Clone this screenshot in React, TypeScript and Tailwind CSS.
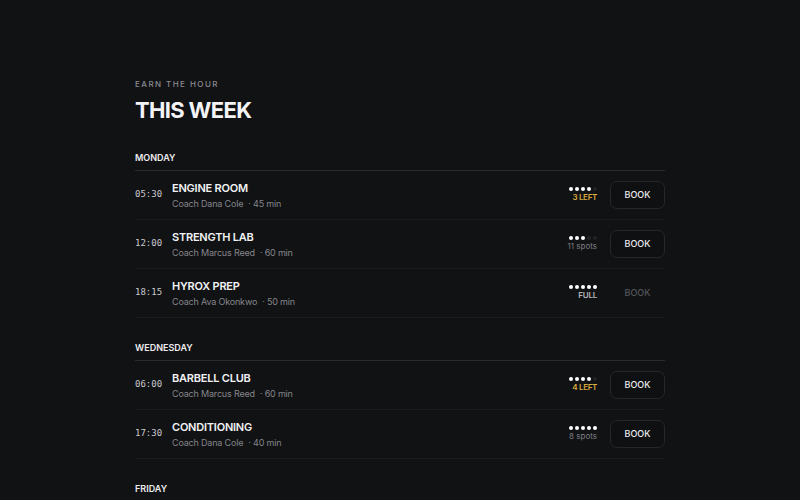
import React from "react";

type Session = {
  time: string;
  name: string;
  coach: string;
  mins: number;
  filled: number;
  status: string;
  tone: "low" | "open" | "full";
};

const days: { day: string; sessions: Session[] }[] = [
  {
    day: "MONDAY",
    sessions: [
      { time: "05:30", name: "ENGINE ROOM", coach: "Coach Dana Cole", mins: 45, filled: 4, status: "3 LEFT", tone: "low" },
      { time: "12:00", name: "STRENGTH LAB", coach: "Coach Marcus Reed", mins: 60, filled: 3, status: "11 spots", tone: "open" },
      { time: "18:15", name: "HYROX PREP", coach: "Coach Ava Okonkwo", mins: 50, filled: 5, status: "FULL", tone: "full" },
    ],
  },
  {
    day: "WEDNESDAY",
    sessions: [
      { time: "06:00", name: "BARBELL CLUB", coach: "Coach Marcus Reed", mins: 60, filled: 4, status: "4 LEFT", tone: "low" },
      { time: "17:30", name: "CONDITIONING", coach: "Coach Dana Cole", mins: 40, filled: 5, status: "8 spots", tone: "open" },
    ],
  },
  {
    day: "FRIDAY",
    sessions: [
      { time: "07:00", name: "ENGINE ROOM", coach: "Coach Ava Okonkwo", mins: 45, filled: 2, status: "14 spots", tone: "open" },
    ],
  },
];

function Dots({ filled }: { filled: number }) {
  return (
    <div className="flex gap-[2px]">
      {[0, 1, 2, 3, 4].map((i) => (
        <span
          key={i}
          className={i < filled ? "h-[4px] w-[4px] rounded-full bg-white" : "h-[4px] w-[4px] rounded-full bg-[#222327]"}
        />
      ))}
    </div>
  );
}

function Row({ s }: { s: Session }) {
  const statusClass =
    s.tone === "low"
      ? "text-[#d9a93f] font-semibold tracking-[-0.04em]"
      : s.tone === "full"
      ? "text-[#b5b5ba] font-semibold tracking-[-0.03em]"
      : "text-[#7d7d83]";
  return (
    <div className="flex h-[49px] items-center border-b border-[#1b1c1f]">
      <div className="w-[37px] font-['DejaVu_Sans_Mono',monospace] text-[9px] text-[#c9c9cd]">{s.time}</div>
      <div className="flex flex-1 flex-col">
        <div className="text-[11px] font-semibold leading-[14px] tracking-[-0.02em] text-[#f2f2f4]">{s.name}</div>
        <div className="mt-[3px] flex gap-[5px] text-[9px] leading-[12px] tracking-[-0.02em] text-[#85858b]">
          <span>{s.coach}</span>
          <span>· {s.mins} min</span>
        </div>
      </div>
      <div className="mr-[13px] flex flex-col items-end gap-[1px]">
        <Dots filled={s.filled} />
        <div className={`text-[8px] leading-[11px] ${statusClass}`}>{s.status}</div>
      </div>
      {s.tone === "full" ? (
        <div className="flex h-[28px] w-[55px] items-center justify-center text-[9px] font-medium text-[#55565b]">BOOK</div>
      ) : (
        <button className="flex h-[28px] w-[55px] items-center justify-center rounded-[7px] border border-[#26272b] bg-[#0f1012] text-[9px] font-medium text-[#ececef]">
          BOOK
        </button>
      )}
    </div>
  );
}

export default function App() {
  return (
    <div className="h-[500px] overflow-hidden bg-[#111214] font-['Inter',sans-serif]">
      <div className="mx-auto w-[530px] pt-[79px]">
        <div className="text-[8px] font-medium leading-[10px] tracking-[0.18em] text-[#8a8a90]">EARN THE HOUR</div>
        <h1 className="mt-[7px] text-[22px] font-bold leading-[28px] tracking-[-0.03em] text-[#f4f4f6]">THIS WEEK</h1>
        <div className="mt-[28px] flex flex-col gap-[24px]">
          {days.map((d) => (
            <section key={d.day}>
              <div className="border-b border-[#2a2b2f] pb-[6px] text-[9px] font-semibold leading-[12px] text-[#ececef]">{d.day}</div>
              {d.sessions.map((s, i) => (
                <Row key={i} s={s} />
              ))}
            </section>
          ))}
        </div>
      </div>
    </div>
  );
}
